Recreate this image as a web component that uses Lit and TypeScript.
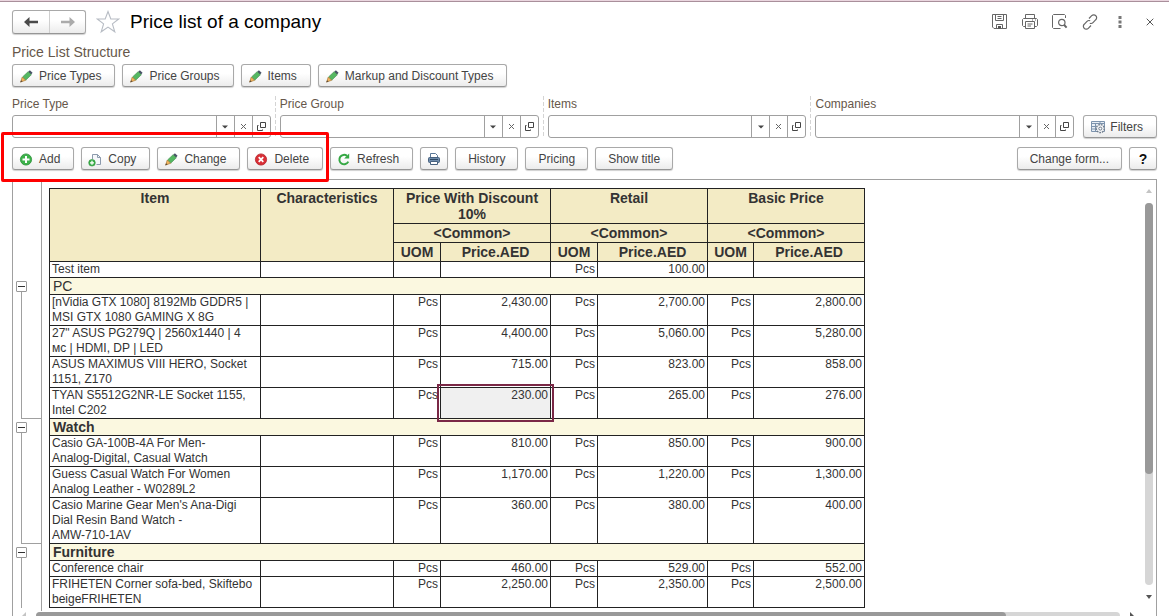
import { LitElement, html, svg, css, nothing } from "lit";
import { customElement, property } from "lit/decorators.js";
import { styleMap } from "lit/directives/style-map.js";

const pencil = svg`<svg width="16" height="16" viewBox="0 0 16 16"><path d="M9.1 4 10.9 2.3 13.6 4.8 12 6.8z" fill="#4a5468"/><path d="M3.5 9 9.1 3.7 12.3 6.8 6.7 12.2z" fill="#55b862" stroke="#3f8a4b" stroke-width=".6"/><path d="M3.3 9 6.6 12.3 1.6 14z" fill="#f2b45c" stroke="#a97a38" stroke-width=".7"/><path d="M2.2 12.2 3.6 13.5 1.2 14.4z" fill="#5a4a38"/></svg>`;
const plus = svg`<svg width="16" height="16" viewBox="0 0 16 16"><circle cx="7" cy="8.5" r="5.6" fill="#3cb24a" stroke="#2b8f39" stroke-width=".8"/><path d="M7 5v7M3.5 8.5h7" stroke="#fff" stroke-width="2"/></svg>`;
const copy = svg`<svg width="16" height="16" viewBox="0 0 16 16"><path d="M4.5 8V3.5h5l3 3v7H8.5" fill="#f5f7fa" stroke="#8c9aac"/><path d="M9.5 3.5v3h3" fill="none" stroke="#8c9aac"/><circle cx="4" cy="11.8" r="3.3" fill="#3cb24a" stroke="#2b8f39" stroke-width=".6"/><path d="M4 9.8v4M2 11.8h4" stroke="#fff" stroke-width="1.3"/></svg>`;
const remove = svg`<svg width="16" height="16" viewBox="0 0 16 16"><circle cx="7" cy="8.5" r="5.6" fill="#d92f36" stroke="#b3222a" stroke-width=".8"/><path d="m4.7 6.2 4.6 4.6M9.3 6.2l-4.6 4.6" stroke="#fff" stroke-width="1.8"/></svg>`;
const refresh = svg`<svg width="16" height="16" viewBox="0 0 16 16"><path d="M10 4.9A4.7 4.7 0 1 0 11.3 10.6" fill="none" stroke="#35a844" stroke-width="2"/><path d="M12.2 2.6v5H7.2z" fill="#35a844"/></svg>`;
const printer = svg`<svg width="14" height="14" viewBox="0 0 14 14"><path d="M3.5 6V1.5h5l2 2V6" fill="#fff" stroke="#5b7898"/><rect x="1.5" y="5.5" width="11" height="5" rx="1" fill="#6f8cab" stroke="#47617f"/><path d="M3 7.5h8" stroke="#2f4864"/><path d="M3.5 9.5h7v3h-7z" fill="#fff" stroke="#47617f"/></svg>`;
const filters = svg`<svg width="16" height="16" viewBox="0 0 16 16"><path d="M1.5 2.5h13v10h-13z" fill="#e8eef5" stroke="#7c93ad"/><path d="M1.5 4.5h13M5.5 4v8.5M1.5 7.5h4M1.5 10h4M10 2.5v3" fill="none" stroke="#7c93ad"/><circle cx="10.3" cy="9.6" r="4" fill="#f3f4f6" stroke="#6d7b8b" stroke-width="1.4" stroke-dasharray="1.8 .9"/><circle cx="10.3" cy="9.6" r="1.5" fill="#fff" stroke="#6d7b8b"/></svg>`;
const arrowLeft = svg`<svg width="14" height="10" viewBox="0 0 14 10"><path d="M5.5 0v3.7H14v2.6H5.5V10L0 5z" fill="#4a4a4a"/></svg>`;
const arrowRight = svg`<svg width="14" height="10" viewBox="0 0 14 10"><path d="M8.5 0v3.7H0v2.6h8.5V10L14 5z" fill="#ababab"/></svg>`;
const star = svg`<svg width="24" height="24" viewBox="0 0 24 24"><path d="M12 1.5 14.8 9h7.9l-6.3 4.9 2.4 7.9L12 17.1l-6.8 4.7 2.4-7.9L1.3 9h7.9z" fill="#fff" stroke="#b7bcc4" stroke-width="1.1"/></svg>`;
const caret = svg`<svg width="6" height="4" viewBox="0 0 6 4"><path d="M0 .5h6L3 3.5z" fill="#444"/></svg>`;
const cross = svg`<svg width="7" height="7" viewBox="0 0 7 7"><path d="m1 1 5 5M6 1 1 6" stroke="#666"/></svg>`;
const open = svg`<svg width="11" height="11" viewBox="0 0 11 11"><path d="M4.5 1.5h5v5h-5zM2.5 4.5h-1v5h5v-1" fill="none" stroke="#444"/></svg>`;

const save = svg`<svg width="16" height="16" viewBox="0 0 16 16"><path d="M.5.5h14v14H2l-1.500-1.500zM3.500.5v6h8v-6M4.500 14.500v-4h6v4M5.500 2.500h4M5.500 4.500h4" fill="none" stroke="#666"/><path d="M6 12h3v2.500H6z" fill="#555"/></svg>`;
const print = svg`<svg width="16" height="16" viewBox="0 0 16 16"><path d="M3.500 4.500v-4h9v4M3.500 12.500h-2l-1-1v-6l1-1h13l1 1v6l-1 1h-2M3.500 7.500h9v7h-9zM5.500 10h5M5.500 12h3.500M10 6h1M13 6h1" fill="none" stroke="#666"/></svg>`;
const preview = svg`<svg width="16" height="16" viewBox="0 0 16 16"><path d="M13.500 4V1.500l-1-1h-11l-1 1v12l1 1h7" fill="none" stroke="#666"/><circle cx="9.800" cy="8.500" r="3.200" fill="none" stroke="#666" stroke-width="1.200"/><path d="m12 10.800 2.600 2.800" stroke="#666" stroke-width="2"/></svg>`;
const link = svg`<svg width="16" height="16" viewBox="0 0 16 16" fill="none" stroke="#666" stroke-width="1.200"><path d="m7 4.500 2.700-2.800a2.800 2.800 0 0 1 4.100 0 2.800 2.800 0 0 1 0 4L11 8.600c-1 1-2.300 1-3.200.6M9 11.500l-2.700 2.800a2.800 2.800 0 0 1-4.100 0 2.800 2.800 0 0 1 0-4L5 7.400c1-1 2.300-1 3.200-.6"/></svg>`;
const more = svg`<svg width="4" height="12" viewBox="0 0 4 12"><path d="M.5 0h3v3h-3zM.5 4.500h3v3h-3zM.5 9h3v3h-3z" fill="#777"/></svg>`;
const close = svg`<svg width="8" height="8" viewBox="0 0 8 8"><path d="m.7.7 6.600 6.600M7.300.7.7 7.300" stroke="#555"/></svg>`;

type Price = [uom: string, value: string];
interface Row { name: string; prices: Price[]; selected?: number }
interface Group { name: string; plain?: boolean; rows: Row[] }

const pcs = (...values: string[]): Price[] => values.map((v) => [v ? "Pcs" : "", v]);

const looseRows: Row[] = [{ name: "Test item", prices: pcs("", "100.00", "") }];
const groups: Group[] = [
  { name: "PC", plain: true, rows: [
    { name: "[nVidia GTX 1080] 8192Mb GDDR5 |\nMSI GTX 1080 GAMING X 8G", prices: pcs("2,430.00", "2,700.00", "2,800.00") },
    { name: "27\" ASUS PG279Q | 2560x1440 | 4\nмс | HDMI, DP | LED", prices: pcs("4,400.00", "5,060.00", "5,280.00") },
    { name: "ASUS MAXIMUS VIII HERO, Socket\n1151, Z170", prices: pcs("715.00", "823.00", "858.00") },
    { name: "TYAN S5512G2NR-LE Socket 1155,\nIntel C202", prices: pcs("230.00", "265.00", "276.00"), selected: 0 },
  ] },
  { name: "Watch", rows: [
    { name: "Casio GA-100B-4A For Men-\nAnalog-Digital, Casual Watch", prices: pcs("810.00", "850.00", "900.00") },
    { name: "Guess Casual Watch For Women\nAnalog Leather - W0289L2", prices: pcs("1,170.00", "1,220.00", "1,300.00") },
    { name: "Casio Marine Gear Men's Ana-Digi\nDial Resin Band Watch -\nAMW-710-1AV", prices: pcs("360.00", "380.00", "400.00") },
  ] },
  { name: "Furniture", rows: [
    { name: "Conference chair", prices: pcs("460.00", "529.00", "552.00") },
    { name: "FRIHETEN Corner sofa-bed, Skiftebo\nbeigeFRIHETEN", prices: pcs("2,250.00", "2,350.00", "2,500.00") },
  ] },
];
const priceTypes = ["Price With Discount 10%", "Retail", "Basic Price"];

const controls = css`
  * { box-sizing: border-box; }
  svg { display: block; flex: none; }
  button, input { font: inherit; color: inherit; margin: 0; }
  .btn {
    display: inline-flex; align-items: center; justify-content: center; gap: 4px;
    height: 23px; padding: 0 12px; white-space: nowrap; color: #444;
    border: 1px solid #a9a9a9; border-bottom-color: #969696; border-radius: 3px;
    background: linear-gradient(#fff 40%, #ececec); box-shadow: 0 1px 1px #d0d0d0;
  }
  .btn.with-icon { padding: 0 13px 0 6px; }
`;

@customElement("filter-field")
class FilterField extends LitElement {
  @property() label = "";
  static styles = [controls, css`
    :host { display: block; min-width: 0; }
    label { display: block; height: 19px; line-height: 16px; color: #66574a; }
    .box { display: flex; height: 23px; border: 1px solid #a0a0a0; border-radius: 3px; background: #fff; overflow: hidden; }
    input { flex: 1; min-width: 0; border: 0; padding: 0 4px; outline: none; background: none; }
    .box button { width: 18px; padding: 0; border: 0; border-left: 1px solid #a0a0a0; background: none; display: grid; place-items: center; }
  `];
  render() {
    return html`<label for="value">${this.label}</label>
      <div class="box">
        <input id="value" type="text">
        <button aria-label="Choose">${caret}</button>
        <button aria-label="Clear">${cross}</button>
        <button aria-label="Open">${open}</button>
      </div>`;
  }
}

@customElement("price-table")
class PriceTable extends LitElement {
  static styles = css`
    * { box-sizing: border-box; }
    :host { display: block; padding-top: 8px; background: linear-gradient(#a0a0a0, #a0a0a0) 28px 0 / 1px 100% no-repeat; }
    table { width: 852px; table-layout: fixed; border-collapse: separate; border-spacing: 0; font-size: 12px; line-height: 15px; color: #333; }
    td, th { padding: 0 2px; border: solid #222; border-width: 0 1px 1px 0; vertical-align: top; text-align: right; }
    td { white-space: pre; }
    th { font-size: 14px; line-height: 16px; padding: 1px 2px; text-align: center; background: #f3ebc5; }
    .sub th { line-height: 18px; padding: 0 2px; }
    .top th { border-top-width: 1px; }
    .first { border-left-width: 1px; text-align: left; }
    th.first { text-align: center; }
    .group .first { font-size: 14px; line-height: 16px; font-weight: bold; padding-left: 3px; background: #fbf8e0; }
    .group .first.plain { font-weight: normal; }
    .gutter { border: 0; padding: 3px 0 0 3px; background: none; }
    .branch {
      background:
        linear-gradient(#a0a0a0, #a0a0a0) 8px 3px / 1px 100% no-repeat,
        linear-gradient(#a0a0a0, #a0a0a0) 8px 100% / 20px 1px no-repeat;
    }
    .branch.open { background: linear-gradient(#a0a0a0, #a0a0a0) 8px 3px / 1px 100% no-repeat; }
    .toggle { display: grid; place-items: center; width: 11px; height: 11px; padding: 0; border: 1px solid #999; border-radius: 1px; background: #fff; }
    .toggle::before { content: ""; width: 7px; height: 1px; background: #333; }
    .selected { position: relative; background: #f0f0f0; }
    .selected::after { content: ""; position: absolute; inset: -4px; border: 2px solid #7a2846; }
  `;
  cells(row: Row) {
    return html`<td class="first">${row.name}</td><td></td>
      ${row.prices.map(([uom, value], i) => html`<td>${uom}</td><td class=${row.selected === i ? "selected" : ""}>${value}</td>`)}`;
  }
  render() {
    return html`<table>
      <colgroup>
        ${[36, 212, 133, 47, 110, 47, 110, 46, 111].map((w) => html`<col style=${styleMap({ width: `${w}px` })}>`)}
      </colgroup>
      <thead>
        <tr class="top">
          <td class="gutter" rowspan="3"></td>
          <th class="first" rowspan="3">Item</th>
          <th rowspan="3">Characteristics</th>
          ${priceTypes.map((p) => html`<th colspan="2">${p}</th>`)}
        </tr>
        <tr class="sub">${priceTypes.map(() => html`<th colspan="2">&lt;Common&gt;</th>`)}</tr>
        <tr class="sub">${priceTypes.map(() => html`<th>UOM</th><th>Price.AED</th>`)}</tr>
      </thead>
      <tbody>
        ${looseRows.map((r) => html`<tr><td class="gutter"></td>${this.cells(r)}</tr>`)}
        ${groups.map((g, i) => html`
          <tr class="group">
            <td class="gutter branch ${i === groups.length - 1 ? "open" : ""}" rowspan=${g.rows.length + 1}><button class="toggle" aria-label="Collapse ${g.name}"></button></td>
            <td class="first ${g.plain ? "plain" : ""}" colspan="8">${g.name}</td>
          </tr>
          ${g.rows.map((r) => html`<tr>${this.cells(r)}</tr>`)}`)}
      </tbody>
    </table>`;
  }
}

@customElement("app-root")
class AppRoot extends LitElement {
  static styles = [controls, css`
    :host {
      display: flex; flex-direction: column; height: 100vh; overflow: hidden; background: #fff;
      font: 12px/16px "Liberation Sans", Arial, sans-serif; color: #444;
      border-top: 1px solid #ead6df;
    }
    header { display: flex; align-items: center; height: 40px; padding: 0 12px; border-top: 1px solid #a98f9b; }
    .nav { display: flex; border: 1px solid #a9a9a9; border-bottom-color: #969696; border-radius: 3px; background: linear-gradient(#fff 40%, #ececec); box-shadow: 0 1px 1px #d0d0d0; }
    .nav button { width: 36px; height: 22px; padding: 0; border: 0; background: none; display: grid; place-items: center; }
    .nav button + button { border-left: 1px solid #cfcfcf; }
    .bare { padding: 0; border: 0; background: none; display: grid; place-items: center; }
    .star { margin: 0 10px; }
    h1 { margin: 0; flex: 1; font-size: 19px; line-height: 24px; font-weight: normal; color: #000; }
    .window { display: flex; margin-right: -8px; }
    .window button { width: 30px; height: 24px; }
    h2 { margin: 3px 12px 4px; font-size: 14px; line-height: 16px; font-weight: normal; color: #66574a; }
    .bar { display: flex; gap: 7px; padding: 0 12px; }
    .filters { display: flex; align-items: flex-end; padding: 9px 12px; }
    .filters filter-field { flex: 1; }
    .filters .split { align-self: stretch; width: 9px; background: repeating-linear-gradient(#d4d4d4 0 4px, transparent 4px 6px) 4px 0 / 1px 100% no-repeat; }
    .filters .btn { margin-left: 9px; }
    .tools { position: relative; }
    .spacer { flex: 1; }
    .icon-only { width: 28px; padding: 0; }
    .help { font-weight: bold; font-size: 14px; color: #111; }
    .marker { position: absolute; left: 1px; top: -15px; width: 328px; height: 50px; border: 3px solid #f00; border-radius: 2px; pointer-events: none; z-index: 1; }
    .sheet { flex: 1; min-height: 0; display: grid; grid-template: minmax(0, 1fr) 9px / minmax(0, 1fr) 14px; margin: 9px 12px -4px; border: 1px solid #a0a0a0; }
    .view { overflow: hidden; }
    price-table { min-height: 100%; }
    .vbar { display: flex; flex-direction: column; align-items: center; gap: 10px; padding: 9px 0 12px; }
    .vtrack { flex: 1; width: 8px; border-radius: 4px; background: #d6d6d6; }
    .hbar { grid-column: 1 / 3; display: flex; align-items: center; gap: 10px; padding: 0 22px 0 9px; }
    .htrack { flex: 1; height: 8px; border-radius: 4px; background: #d6d6d6; }
    .thumb { border-radius: 4px; background: #999; }
    .htrack .thumb { height: 8px; }
  `];
  tool(icon: unknown, text: string) {
    return html`<button class="btn ${icon ? "with-icon" : ""}">${icon || nothing}${text}</button>`;
  }
  render() {
    return html`
      <header>
        <div class="nav"><button aria-label="Back">${arrowLeft}</button><button aria-label="Forward">${arrowRight}</button></div>
        <button class="bare star" aria-label="Favorite">${star}</button>
        <h1>Price list of a company</h1>
        <div class="window">
          ${[["Save", save], ["Print", print], ["Preview", preview], ["Link", link], ["More", more], ["Close", close]].map(
            ([name, icon]) => html`<button class="bare" aria-label=${name as string}>${icon}</button>`)}
        </div>
      </header>
      <h2>Price List Structure</h2>
      <nav class="bar">
        ${["Price Types", "Price Groups", "Items", "Markup and Discount Types"].map((t) => this.tool(pencil, t))}
      </nav>
      <div class="filters">
        ${["Price Type", "Price Group", "Items", "Companies"].map((l, i) => html`${i ? html`<span class="split"></span>` : nothing}<filter-field label=${l}></filter-field>`)}
        ${this.tool(filters, "Filters")}
      </div>
      <div class="bar tools">
        ${this.tool(plus, "Add")}${this.tool(copy, "Copy")}${this.tool(pencil, "Change")}${this.tool(remove, "Delete")}${this.tool(refresh, "Refresh")}
        <button class="btn icon-only" aria-label="Print">${printer}</button>
        ${this.tool(null, "History")}${this.tool(null, "Pricing")}${this.tool(null, "Show title")}
        <span class="spacer"></span>
        ${this.tool(null, "Change form...")}
        <button class="btn icon-only help">?</button>
        <div class="marker"></div>
      </div>
      <div class="sheet">
        <div class="view"><price-table></price-table></div>
        <div class="vbar">
          <svg width="6" height="4" viewBox="0 0 6 4"><path d="M0 4h6L3 0z" fill="#c4c4c4"/></svg>
          <div class="vtrack"><div class="thumb" style=${styleMap({ height: "71%" })}></div></div>
          <svg width="6" height="4" viewBox="0 0 6 4"><path d="M0 0h6L3 4z" fill="#555"/></svg>
        </div>
        <div class="hbar">
          <svg width="4" height="8" viewBox="0 0 4 8"><path d="M4 0v8L0 4z" fill="#c4c4c4"/></svg>
          <div class="htrack"><div class="thumb" style=${styleMap({ width: "89.5%" })}></div></div>
          <svg width="4" height="8" viewBox="0 0 4 8"><path d="M0 0v8l4-4z" fill="#555"/></svg>
        </div>
      </div>`;
  }
}
